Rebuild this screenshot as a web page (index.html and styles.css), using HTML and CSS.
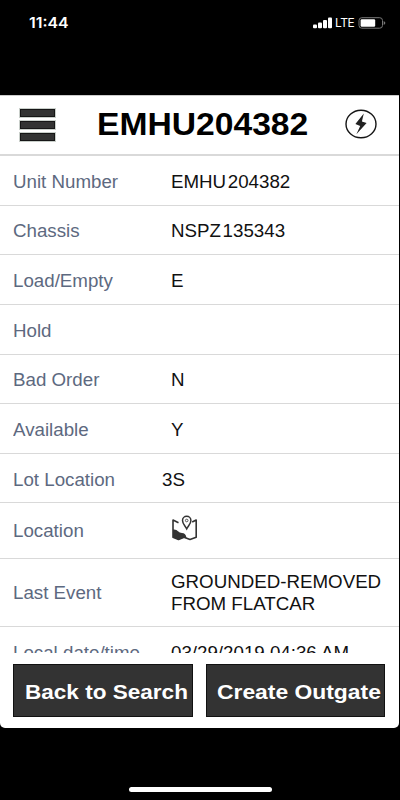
FILE: index.html
```html
<!DOCTYPE html>
<html lang="en">
<head>
<meta charset="utf-8">
<title>EMHU204382</title>
<link rel="stylesheet" href="styles.css">
</head>
<body>
<div class="status">
  <span class="time">11:44</span>
  <div class="indicators">
    <svg class="signal" width="19" height="12" viewBox="0 0 19 12" fill="#fff"><rect x="0" y="7.5" width="4" height="3.8" rx="1"/><rect x="5" y="5.5" width="4" height="5.8" rx="1"/><rect x="10" y="3" width="4" height="8.3" rx="1"/><rect x="15" y="0.5" width="4" height="10.8" rx="1"/></svg>
    <span class="lte">LTE</span>
    <svg class="battery" width="28" height="12" viewBox="0 0 28 12"><rect x="1" y=".7" width="23.5" height="10.5" rx="2.8" fill="none" stroke="#777" stroke-width="1"/><rect x="2.6" y="2.2" width="14.6" height="7.6" rx="1.2" fill="#fff"/><path d="M25.7 4v4q1.7-.8 1.7-2t-1.7-2z" fill="#777"/></svg>
  </div>
</div>
<main class="panel">
  <header class="header">
    <div class="menu"><i></i><i></i><i></i></div>
    <h1><span>EMHU204382</span></h1>
    <svg class="bolt" width="32" height="30" viewBox="0 0 32 30"><ellipse cx="16" cy="15" rx="15" ry="13.8" fill="#fff" stroke="#151515" stroke-width="1.4"/><path d="M18.8 4.6 10.4 15l4.8 2-3.8 8.2L21.6 14l-4.7-1.6z" fill="#222"/></svg>
  </header>
  <div class="list">
    <div class="row"><span class="label">Unit Number</span><span class="value">EMHU<b class="digits">204382</b></span></div>
    <div class="row"><span class="label">Chassis</span><span class="value">NSPZ<b class="digits">135343</b></span></div>
    <div class="row"><span class="label">Load/Empty</span><span class="value">E</span></div>
    <div class="row"><span class="label">Hold</span><span class="value"></span></div>
    <div class="row"><span class="label">Bad Order</span><span class="value">N</span></div>
    <div class="row"><span class="label">Available</span><span class="value">Y</span></div>
    <div class="row lot"><span class="label">Lot Location</span><span class="value">3S</span></div>
    <div class="row place"><span class="label">Location</span>
      <svg class="map" width="28" height="30" viewBox="0 0 28 30"><path d="M7.5 9.8 2 7v17.2l5.5 2.3 5.5-2.3 6 2.3 6.2-2.3V7l-4 2" fill="none" stroke="#333" stroke-width="1.6" stroke-linejoin="round"/><path d="M2 16.6q3.5-.4 5 1.6 1.5 1.700 4 1.700 3.500.4 4 3.200l.5 2.200-2.500-.8-5.500 2.200L2 24.200z" fill="#333"/><path d="M15.700 15.800c-1.500-3-4.200-5-4.200-8.300a4.200 4.200 0 0 1 8.400 0c0 3.300-2.700 5.300-4.200 8.300z" fill="#fff" stroke="#333" stroke-width="1.500"/><circle cx="15.700" cy="7.500" r="1.300" fill="#fff" stroke="#555"/></svg>
    </div>
    <div class="row event"><span class="label">Last Event</span><span class="value">GROUNDED-REMOVED<br>FROM FLATCAR</span></div>
    <div class="row last"><span class="label">Local date/time</span><span class="value">03/29/2019 04:36 AM</span></div>
  </div>
  <footer class="actions">
    <div class="button"><span>Back to Search</span></div>
    <div class="button create"><span>Create Outgate</span></div>
  </footer>
</main>
<div class="home"></div>
</body>
</html>
```
FILE: styles.css
```css
* { box-sizing: border-box; }
body { margin: 0; width: 400px; height: 800px; background: #000; overflow: hidden; font-family: "Liberation Sans", Arial, sans-serif; }
.status { height: 95px; padding: 16px 14px 0 29px; display: flex; justify-content: space-between; align-items: flex-start; color: #fff; }
.time { font: 600 15px/14px Inter, sans-serif; white-space: nowrap; transform: scaleX(1.06); transform-origin: 0 0; }
.indicators { display: flex; align-items: flex-start; }
.signal { margin-top: 1px; }
.lte { margin: 0 3px 0 3.5px; width: 20px; font: 400 12px/14px Inter, sans-serif; letter-spacing: -.5px; }
.battery { margin-top: 1px; }
.panel { width: 399px; height: 633px; background: #fff; border-radius: 0 0 5px 5px; overflow: hidden; }
.header { height: 61px; border-top: 1px solid #ccc; border-bottom: 2px solid #d9d9d9; padding: 0 22px 0 20px; display: flex; align-items: flex-start; }
.menu { width: 35px; margin-top: 13px; display: flex; flex-direction: column; gap: 4px; }
.menu i { height: 8px; background: #333; border: 1px solid #161616; outline: 1px solid #c9cfca; }
h1 { margin: 11px 0 0 41.5px; width: 248px; font-size: 31px; line-height: 36px; font-weight: 700; }
h1 span { display: inline-block; transform: scaleX(1.085); transform-origin: 0 0; }
.bolt { margin-top: 13px; flex: none; }
.list { height: 497px; overflow: hidden; }
.row { height: 49.65px; border-bottom: 1.4px solid #d9d9d9; display: grid; grid-template-columns: 158.5px 1fr; align-items: center; padding: 3px 0 0 12.6px; font-size: 17.5px; line-height: 22px; white-space: nowrap; }
.label, .value { transform: scaleX(1.07); transform-origin: 0 50%; }
.label { color: #5d6980; }
.value { color: #111; }
.digits { font-weight: 400; margin-left: 1.5px; }
.lot { grid-template-columns: 149px 1fr; }
.place { height: 55.4px; padding-top: 1px; }
.map { margin-top: -6px; }
.event { height: 68px; padding-top: 1px; }
.last { align-items: start; padding-top: 15px; border: 0; }
.actions { padding: 11px 14px 0 13px; display: flex; gap: 13px; }
.button { flex: 1; height: 53px; background: #333; border: 1px solid #111; color: #fff; font-size: 20.5px; line-height: 53px; font-weight: 700; white-space: nowrap; padding-left: 10.5px; }
.button span { display: inline-block; transform: scaleX(1.1); transform-origin: 0 0; }
.create span { transform: scaleX(1.115); }
.home { width: 143px; height: 5px; margin: 59px 0 0 129px; border-radius: 3px; background: #fff; }
```
